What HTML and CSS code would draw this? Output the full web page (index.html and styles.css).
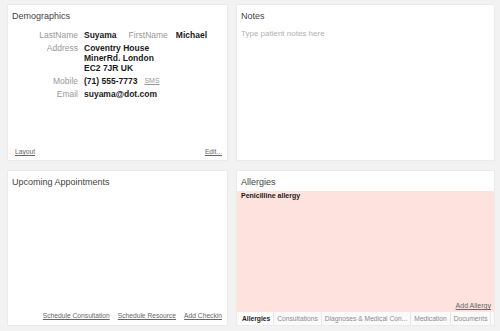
FILE: index.html
```html
<!DOCTYPE html>
<html lang="en">
  <head>
    <meta charset="UTF-8" />
    <meta name="viewport" content="width=device-width, initial-scale=1.0" />
    <title>Patient Overview</title>
    <link rel="stylesheet" href="styles.css">
  </head>
  <body>
    <div class="dashboard">
      <div class="panel">
        <h3>Demographics</h3>
        <div class="demo">
          <div class="row">
            <span class="label">LastName</span>
            <span class="value">Suyama</span>
            <span class="label second">FirstName</span>
            <span class="value">Michael</span>
          </div>
          <div class="row">
            <span class="label">Address</span>
            <span class="value">Coventry House<br />MinerRd. London<br />EC2 7JR UK</span>
          </div>
          <div class="row">
            <span class="label">Mobile</span>
            <span class="value">(71) 555-7773</span>
            <a href="#" class="sms">SMS</a>
          </div>
          <div class="row">
            <span class="label">Email</span>
            <span class="value">suyama@dot.com</span>
          </div>
        </div>
        <div class="footer spread">
          <a href="#">Layout</a>
          <a href="#">Edit...</a>
        </div>
      </div>

      <div class="panel">
        <h3>Notes</h3>
        <div class="notes">Type patient notes here</div>
      </div>

      <div class="panel">
        <h3>Upcoming Appointments</h3>
        <div class="footer end">
          <a href="#">Schedule Consultation</a>
          <a href="#">Schedule Resource</a>
          <a href="#">Add Checkin</a>
        </div>
      </div>

      <div class="panel allergies">
        <h3>Allergies</h3>
        <div class="allergy-list">
          <div class="allergy">Penicilline allergy</div>
          <div class="add"><a href="#">Add Allergy</a></div>
        </div>
        <div class="tabs">
          <span class="tab active">Allergies</span>
          <span class="tab">Consultations</span>
          <span class="tab">Diagnoses &amp; Medical Con...</span>
          <span class="tab">Medication</span>
          <span class="tab">Documents</span>
        </div>
      </div>
    </div>
  </body>
</html>
```

FILE: styles.css
```css
body {
  font-family: "Liberation Sans", Arial, sans-serif;
  background-color: #f2f2f2;
  margin: 0;
  padding: 5px 6px 6px 8px;
}

.dashboard {
  display: grid;
  grid-template-columns: 219px 257px;
  grid-template-rows: 155px 154px;
  gap: 11px 10px;
}

.panel {
  background-color: #ffffff;
  display: flex;
  flex-direction: column;
  padding: 5px 4px 4px 4px;
  box-sizing: border-box;
  box-shadow: 0 0 0 1px #ebebeb;
}

h3 {
  margin: 0;
  font-size: 9px;
  line-height: 12px;
  font-weight: normal;
  color: #444;
}

.demo {
  margin-top: 8px;
  display: flex;
  flex-direction: column;
  gap: 3px;
  font-size: 8.5px;
  line-height: 10px;
}

.row {
  display: flex;
  align-items: flex-start;
}

.label {
  width: 66px;
  text-align: right;
  color: #999;
  margin-right: 6px;
}

.label.second {
  width: auto;
  margin-left: 12px;
  margin-right: 8px;
}

.value {
  font-weight: bold;
  color: #1a1a1a;
}

.sms {
  margin-left: 7px;
  font-size: 7px;
  color: #999;
}

a {
  color: #666;
}

.footer {
  margin-top: auto;
  display: flex;
  font-size: 6.7px;
  line-height: 9px;
  padding: 0 1px 0 3px;
}

.spread {
  justify-content: space-between;
}

.end {
  justify-content: flex-end;
  gap: 8px;
  padding-bottom: 1px;
}

.notes {
  margin-top: 7px;
  font-size: 8px;
  color: #b0b0b0;
}

.allergies {
  padding: 5px 0 0 0;
}

.allergies h3 {
  padding: 0 4px;
  height: 15px;
}

.allergy-list {
  flex: 1;
  background-color: #fde2de;
  display: flex;
  flex-direction: column;
  padding: 1px 3px 3px 4px;
}

.allergy {
  font-size: 7px;
  font-weight: bold;
  color: #1a1a1a;
}

.add {
  margin-top: auto;
  text-align: right;
  font-size: 7px;
}

.tabs {
  display: flex;
  height: 13px;
  padding-left: 2px;
  font-size: 6.7px;
  line-height: 13px;
  background-color: #fafafa;
  white-space: nowrap;
  overflow: hidden;
}

.tab {
  flex-shrink: 0;
  padding: 0 3px;
  color: #8a8a8a;
  border-right: 1px solid #e8e8e8;
}

.tab.active {
  color: #222;
  font-weight: bold;
  background-color: #ffffff;
}
```
